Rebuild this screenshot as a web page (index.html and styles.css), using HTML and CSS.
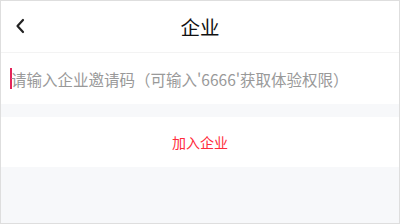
FILE: index.html
```html
<!DOCTYPE html>
<html lang="zh">
<head>
<meta charset="utf-8">
<link rel="stylesheet" href="styles.css">
</head>
<body>
<div class="page">
  <header class="nav">
    <span class="back">
      <svg width="10" height="16" viewBox="0 0 10 16"><polyline points="8,2 2.5,8 8,14" fill="none" stroke="#222" stroke-width="2.2" stroke-linecap="round" stroke-linejoin="round"/></svg>
    </span>
    <h1 class="title">企业</h1>
  </header>
  <div class="field">
    <span class="caret"></span>
    <span class="placeholder">请输入企业邀请码（可输入'6666'获取体验权限）</span>
  </div>
  <div class="gap"></div>
  <div class="action">加入企业</div>
  <div class="rest"></div>
</div>
</body>
</html>
```

FILE: styles.css
```css
html, body {
  margin: 0;
  padding: 0;
}
body {
  width: 400px;
  height: 224px;
  overflow: hidden;
  font-family: "Noto Sans CJK SC", "Noto Sans", sans-serif;
}
.page {
  box-sizing: border-box;
  width: 400px;
  height: 224px;
  border: 1px solid #dedede;
  background: #f7f8fa;
  display: flex;
  flex-direction: column;
}
.nav {
  height: 51px;
  background: #fff;
  border-bottom: 1px solid #f3f3f3;
  display: flex;
  align-items: center;
  justify-content: center;
  position: relative;
}
.back {
  position: absolute;
  left: 14px;
  top: 17px;
  display: flex;
}
.title {
  margin: 0;
  font-size: 19.5px;
  font-weight: 400;
  color: #111;
  line-height: 1;
}
.field {
  height: 51px;
  background: #fff;
  display: flex;
  align-items: center;
  padding-left: 9px;
}
.caret {
  width: 2px;
  height: 21px;
  background: #e3245a;
  margin-right: -1px;
}
.placeholder {
  font-size: 15.5px;
  color: #999;
  white-space: nowrap;
}
.gap {
  height: 13px;
}
.action {
  height: 50px;
  background: #fff;
  display: flex;
  align-items: center;
  justify-content: center;
  color: #ff2b3b;
  font-size: 14px;
}
.rest {
  flex: 1;
}
```
